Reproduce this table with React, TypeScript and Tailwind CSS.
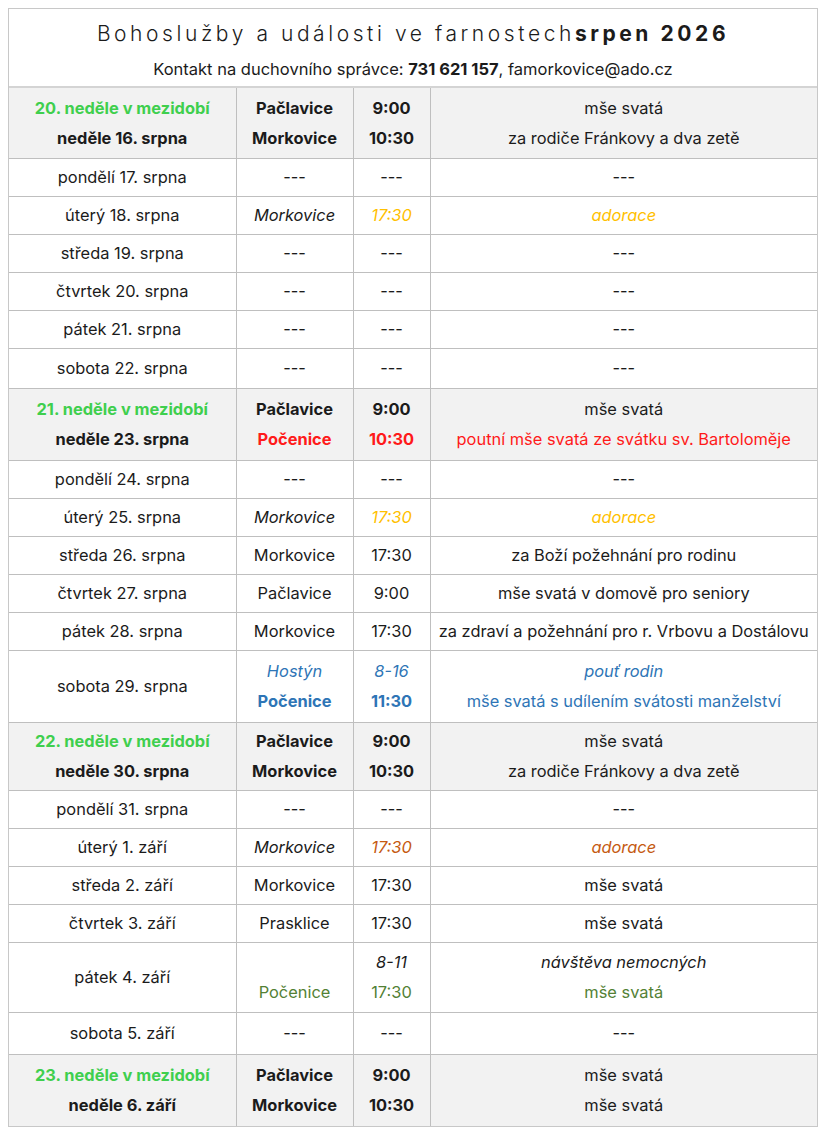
const GREEN = "text-[#3fcf4e]";

type Line = { text: string; cls?: string };
type Row = {
  h: number;
  shade?: boolean;
  day: Line[];
  place: Line[];
  time: Line[];
  what: Line[];
};

const dash = (day: string, h = 38): Row => ({
  h,
  day: [{ text: day }],
  place: [{ text: "---" }],
  time: [{ text: "---" }],
  what: [{ text: "---" }],
});

const sunday = (
  week: string,
  day: string,
  h: number,
  second: { place: string; what: string; cls?: string; whatCls?: string },
  firstWhat = "mše svatá"
): Row => ({
  h,
  shade: true,
  day: [
    { text: week, cls: `font-bold ${GREEN}` },
    { text: day, cls: "font-bold" },
  ],
  place: [
    { text: "Pačlavice", cls: "font-bold" },
    { text: second.place, cls: `font-bold ${second.cls ?? ""}` },
  ],
  time: [
    { text: "9:00", cls: "font-bold" },
    { text: "10:30", cls: `font-bold ${second.cls ?? ""}` },
  ],
  what: [{ text: firstWhat }, { text: second.what, cls: second.whatCls ?? second.cls }],
});

const adoration = (day: string, color: string): Row => ({
  h: 38,
  day: [{ text: day }],
  place: [{ text: "Morkovice", cls: "italic" }],
  time: [{ text: "17:30", cls: `italic ${color}` }],
  what: [{ text: "adorace", cls: `italic ${color}` }],
});

const simple = (day: string, place: string, time: string, what: string): Row => ({
  h: 38,
  day: [{ text: day }],
  place: [{ text: place }],
  time: [{ text: time }],
  what: [{ text: what }],
});

const BLUE = "text-[#2e75b6]";
const DGREEN = "text-[#538135]";

const rows: Row[] = [
  sunday("20. neděle v mezidobí", "neděle 16. srpna", 70, {
    place: "Morkovice",
    what: "za rodiče Fránkovy a dva zetě",
  }),
  dash("pondělí 17. srpna"),
  adoration("úterý 18. srpna", "text-[#ffc000]"),
  dash("středa 19. srpna"),
  dash("čtvrtek 20. srpna"),
  dash("pátek 21. srpna"),
  dash("sobota 22. srpna", 40),
  sunday("21. neděle v mezidobí", "neděle 23. srpna", 72, {
    place: "Počenice",
    what: "poutní mše svatá ze svátku sv. Bartoloměje",
    cls: "text-[#ff1a1a]",
  }),
  dash("pondělí 24. srpna"),
  adoration("úterý 25. srpna", "text-[#ffc000]"),
  simple("středa 26. srpna", "Morkovice", "17:30", "za Boží požehnání pro rodinu"),
  simple("čtvrtek 27. srpna", "Pačlavice", "9:00", "mše svatá v domově pro seniory"),
  simple("pátek 28. srpna", "Morkovice", "17:30", "za zdraví a požehnání pro r. Vrbovu a Dostálovu"),
  {
    h: 72,
    day: [{ text: "sobota 29. srpna" }],
    place: [
      { text: "Hostýn", cls: `italic ${BLUE}` },
      { text: "Počenice", cls: `font-bold ${BLUE}` },
    ],
    time: [
      { text: "8-16", cls: `italic ${BLUE}` },
      { text: "11:30", cls: `font-bold ${BLUE}` },
    ],
    what: [
      { text: "pouť rodin", cls: `italic ${BLUE}` },
      { text: "mše svatá s udílením svátosti manželství", cls: BLUE },
    ],
  },
  sunday("22. neděle v mezidobí", "neděle 30. srpna", 68, {
    place: "Morkovice",
    what: "za rodiče Fránkovy a dva zetě",
  }),
  dash("pondělí 31. srpna"),
  adoration("úterý 1. září", "text-[#c55a11]"),
  simple("středa 2. září", "Morkovice", "17:30", "mše svatá"),
  simple("čtvrtek 3. září", "Prasklice", "17:30", "mše svatá"),
  {
    h: 70,
    day: [{ text: "pátek 4. září" }],
    place: [{ text: "\u00a0" }, { text: "Počenice", cls: DGREEN }],
    time: [
      { text: "8-11", cls: "italic" },
      { text: "17:30", cls: DGREEN },
    ],
    what: [
      { text: "návštěva nemocných", cls: "italic" },
      { text: "mše svatá", cls: DGREEN },
    ],
  },
  dash("sobota 5. září", 42),
  sunday("23. neděle v mezidobí", "neděle 6. září", 72, {
    place: "Morkovice",
    what: "mše svatá",
  }),
];

function Cell({ lines, first }: { lines: Line[]; first?: boolean }) {
  return (
    <td className={`p-0 text-center align-middle ${first ? "" : "border-l border-[#bfbfbf]"}`}>
      {lines.map((l, i) => (
        <div key={i} className={`leading-[30px] whitespace-nowrap ${l.cls ?? ""}`}>
          {l.text}
        </div>
      ))}
    </td>
  );
}

export default function App() {
  return (
    <div
      className="min-h-[1139px] bg-white pt-2 pl-2 text-[16.4px] text-[#1b1b1b]"
      style={{ fontFamily: "Inter, 'Noto Sans', sans-serif" }}
    >
      <div className="w-[810px] border border-[#c8c8c8]">
        <div className="flex h-[79px] flex-col items-center border-b-2 border-[#d4d4d4]">
          <div className="mt-[11px] text-[21px] font-light tracking-[0.17em] leading-[28px]">
            Bohoslužby a události ve farnostech<span className="font-bold">srpen 2026</span>
          </div>
          <div className="mt-[11px] text-[16.5px] leading-[20px]">
            Kontakt na duchovního správce: <span className="font-bold">731 621 157</span>, famorkovice@ado.cz
          </div>
        </div>
        <table className="w-full table-fixed border-collapse">
          <colgroup>
            <col className="w-[227px]" />
            <col className="w-[117px]" />
            <col className="w-[77px]" />
            <col />
          </colgroup>
          <tbody>
            {rows.map((r, i) => (
              <tr
                key={i}
                className={`${r.shade ? "bg-[#f2f2f2]" : ""} ${i === 0 ? "" : "border-t border-[#bfbfbf]"}`}
                style={{ height: r.h }}
              >
                <Cell lines={r.day} first />
                <Cell lines={r.place} />
                <Cell lines={r.time} />
                <Cell lines={r.what} />
              </tr>
            ))}
          </tbody>
        </table>
      </div>
    </div>
  );
}
